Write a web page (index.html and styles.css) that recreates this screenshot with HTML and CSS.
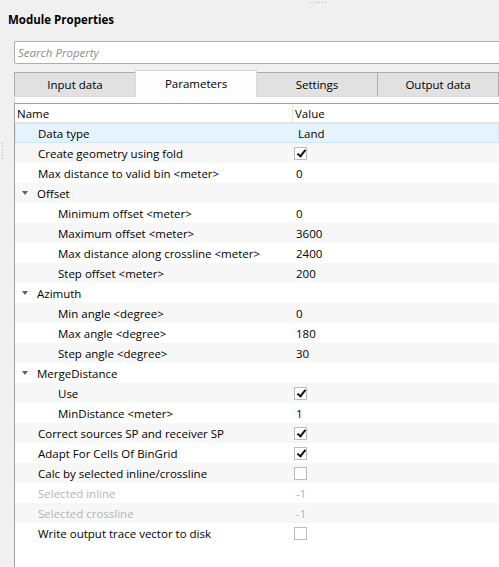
FILE: index.html
```html
<!DOCTYPE html>
<html lang="en">
<head>
    <meta charset="UTF-8">
    <title>Module Properties</title>
    <link rel="stylesheet" href="styles.css">
</head>
<body>
    <div class="grip-top"></div>
    <div class="grip-left"></div>
    <div class="panel-title">Module Properties</div>
    <input class="search" type="text" placeholder="Search Property">

    <div class="tabs">
        <div class="tab">Input data</div>
        <div class="tab active">Parameters</div>
        <div class="tab">Settings</div>
        <div class="tab">Output data</div>
    </div>

    <div class="tab-pane">
        <div class="tree">
            <div class="tree-header">
                <div class="col-name">Name</div>
                <div class="col-value">Value</div>
            </div>

            <div class="row selected"><div class="col-name lvl1">Data type</div><div class="col-value">Land</div></div>
            <div class="row"><div class="col-name lvl1">Create geometry using fold</div><div class="col-value"><span class="check on"></span></div></div>
            <div class="row"><div class="col-name lvl1">Max distance to valid bin &lt;meter&gt;</div><div class="col-value">0</div></div>
            <div class="row"><div class="col-name lvl1"><span class="arrow"></span>Offset</div><div class="col-value"></div></div>
            <div class="row"><div class="col-name lvl2">Minimum offset &lt;meter&gt;</div><div class="col-value">0</div></div>
            <div class="row"><div class="col-name lvl2">Maximum offset &lt;meter&gt;</div><div class="col-value">3600</div></div>
            <div class="row"><div class="col-name lvl2">Max distance along crossline &lt;meter&gt;</div><div class="col-value">2400</div></div>
            <div class="row"><div class="col-name lvl2">Step offset &lt;meter&gt;</div><div class="col-value">200</div></div>
            <div class="row"><div class="col-name lvl1"><span class="arrow"></span>Azimuth</div><div class="col-value"></div></div>
            <div class="row"><div class="col-name lvl2">Min angle &lt;degree&gt;</div><div class="col-value">0</div></div>
            <div class="row"><div class="col-name lvl2">Max angle &lt;degree&gt;</div><div class="col-value">180</div></div>
            <div class="row"><div class="col-name lvl2">Step angle &lt;degree&gt;</div><div class="col-value">30</div></div>
            <div class="row"><div class="col-name lvl1"><span class="arrow"></span>MergeDistance</div><div class="col-value"></div></div>
            <div class="row"><div class="col-name lvl2">Use</div><div class="col-value"><span class="check on"></span></div></div>
            <div class="row"><div class="col-name lvl2">MinDistance &lt;meter&gt;</div><div class="col-value">1</div></div>
            <div class="row"><div class="col-name lvl1">Correct sources SP and receiver SP</div><div class="col-value"><span class="check on"></span></div></div>
            <div class="row"><div class="col-name lvl1">Adapt For Cells Of BinGrid</div><div class="col-value"><span class="check on"></span></div></div>
            <div class="row"><div class="col-name lvl1">Calc by selected inline/crossline</div><div class="col-value"><span class="check"></span></div></div>
            <div class="row disabled"><div class="col-name lvl1">Selected inline</div><div class="col-value">-1</div></div>
            <div class="row disabled"><div class="col-name lvl1">Selected crossline</div><div class="col-value">-1</div></div>
            <div class="row"><div class="col-name lvl1">Write output trace vector to disk</div><div class="col-value"><span class="check"></span></div></div>
        </div>
    </div>
</body>
</html>
```

FILE: styles.css
```css
html, body {
    margin: 0;
    height: 100%;
    overflow: hidden;
}
body {
    position: relative;
    background: #f0f0f0;
    font-family: "Open Sans", "Noto Sans", sans-serif;
    font-size: 11.5px;
    color: #000;
}

/* splitter grips */
.grip-top {
    position: absolute;
    left: 310px;
    top: 2px;
    width: 17px;
    height: 1px;
    background: repeating-linear-gradient(90deg, #b4b4b4 0 1px, transparent 1px 3px);
}
.grip-left {
    position: absolute;
    left: 2px;
    top: 143px;
    width: 1px;
    height: 17px;
    background: repeating-linear-gradient(180deg, #b4b4b4 0 1px, transparent 1px 3px);
}

.panel-title {
    font-weight: bold;
    padding: 12px 8px 0 8px;
    height: 41px;
    box-sizing: border-box;
}

.search {
    display: block;
    margin: 0 0 0 14px;
    width: 520px;
    height: 23px;
    box-sizing: border-box;
    border: 1px solid #adadad;
    border-radius: 2px;
    background: #fff;
    padding: 0 3px;
    font-family: inherit;
    font-size: 11.5px;
    outline: none;
}
.search::placeholder {
    font-style: italic;
    color: #8c8c8c;
}

.tabs {
    display: flex;
    align-items: flex-end;
    margin: 6px 0 0 14px;
    height: 26px;
    width: 600px;
}
.tab {
    width: 122px;
    height: 24px;
    box-sizing: border-box;
    margin-right: -1px;
    border: 1px solid #adadad;
    border-bottom: none;
    background: #e1e1e1;
    display: flex;
    align-items: center;
    justify-content: center;
}
.tab.active {
    width: 122px;
    height: 27px;
    background: #fdfdfd;
    border-color: #d9d9d9;
    position: relative;
    z-index: 1;
    margin-bottom: -1px;
    padding-bottom: 1px;
}

.tab-pane {
    margin-left: 14px;
    border-top: 1px solid #d9d9d9;
    border-left: 1px solid #d9d9d9;
    background: #fdfdfd;
    padding-top: 6px;
    height: 500px;
}
.tree {
    margin-left: -1px;
    border-top: 1px solid #a0a0a0;
    border-left: 1px solid #a0a0a0;
    background: #fff;
    height: 600px;
}

.tree-header, .row {
    display: flex;
    height: 20px;
    box-sizing: border-box;
    align-items: center;
}
.tree-header {
    height: 19px;
    border-bottom: 1px solid #e5e5e5;
    background: #fff;
}
.tree-header .col-name {
    padding-left: 2px;
    border-right: 1px solid #e5e5e5;
}
.tree-header .col-value {
    padding-left: 2px;
}
.col-name {
    width: 278px;
    flex: none;
    height: 100%;
    display: flex;
    align-items: center;
    box-sizing: border-box;
    white-space: nowrap;
    overflow: hidden;
}
.col-value {
    padding-left: 3px;
    height: 100%;
    display: flex;
    align-items: center;
}

.row:nth-child(odd) {
    background: #f7f7f7;
}
.row.selected {
    background: #e5f3ff;
    box-shadow: inset 0 0 0 1px #cce8ff;
}
.row.selected .col-value {
    padding-left: 5px;
}
.row.disabled {
    color: #b4b4b4;
}

.lvl1 { padding-left: 23px; }
.lvl2 { padding-left: 43px; }

.arrow {
    width: 0;
    height: 0;
    border-left: 3.5px solid transparent;
    border-right: 3.5px solid transparent;
    border-top: 4px solid #606060;
    margin-left: -16px;
    margin-right: 9px;
}

.check {
    width: 13px;
    height: 13px;
    box-sizing: border-box;
    border: 1px solid #bcbcbc;
    background: #fff;
    position: relative;
    margin-left: -2px;
}
.check.on::after {
    content: "";
    position: absolute;
    left: 4px;
    top: 0px;
    width: 3px;
    height: 7px;
    border-right: 2px solid #111;
    border-bottom: 2px solid #111;
    transform: rotate(38deg);
}
```
